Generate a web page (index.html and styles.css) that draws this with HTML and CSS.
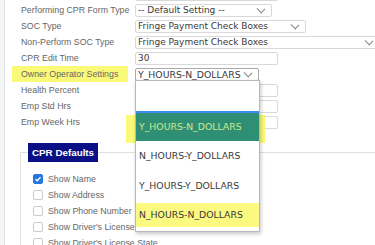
FILE: index.html
```html
<!DOCTYPE html>
<html lang="en">
<head>
  <meta charset="UTF-8" />
  <meta name="viewport" content="width=device-width, initial-scale=1" />
  <title>CPR Settings</title>
  <link rel="stylesheet" href="styles.css">
</head>
<body>
  <div class="page">
    <!-- Campos de configuracion -->
    <div class="form">
      <div class="row">
        <label></label>
        <div class="field w-143"></div>
      </div>
      <div class="row">
        <label>Performing CPR Form Type</label>
        <div class="field select w-137">-- Default Setting --<span class="chev"></span></div>
      </div>
      <div class="row">
        <label>SOC Type</label>
        <div class="field select w-171">Fringe Payment Check Boxes<span class="chev"></span></div>
      </div>
      <div class="row">
        <label>Non-Perform SOC Type</label>
        <div class="field select w-245">Fringe Payment Check Boxes<span class="chev"></span></div>
      </div>
      <div class="row">
        <label>CPR Edit Time</label>
        <div class="field w-143">30</div>
      </div>
      <div class="row">
        <label><span class="hl">Owner Operator Settings</span></label>
        <div class="field select open w-124">Y_HOURS-N_DOLLARS<span class="chev"></span></div>
      </div>
      <div class="row">
        <label>Health Percent</label>
        <div class="field w-143"></div>
      </div>
      <div class="row">
        <label>Emp Std Hrs</label>
        <div class="field w-143"></div>
      </div>
      <div class="row">
        <label>Emp Week Hrs</label>
        <div class="field w-143"></div>
      </div>
    </div>

    <fieldset class="defaults">
      <legend>CPR Defaults</legend>
      <div class="check"><span class="box checked"><svg width="8" height="8" viewBox="0 0 8 8"><path d="M1.5 4.2 L3.2 5.8 L6.5 2.2" fill="none" stroke="#fff" stroke-width="1.4"/></svg></span>Show Name</div>
      <div class="check"><span class="box"></span>Show Address</div>
      <div class="check"><span class="box"></span>Show Phone Number</div>
      <div class="check"><span class="box"></span>Show Driver's License</div>
      <div class="check"><span class="box"></span>Show Driver's License State</div>
    </fieldset>

    <!-- resaltado detras de la opcion activa -->
    <div class="mark-behind"></div>

    <div class="dropdown">
      <div class="opt blank"></div>
      <div class="opt active">Y_HOURS-N_DOLLARS</div>
      <div class="opt">N_HOURS-Y_DOLLARS</div>
      <div class="opt">Y_HOURS-Y_DOLLARS</div>
      <div class="opt marked"><span>N_HOURS-N_DOLLARS</span></div>
    </div>
  </div>
</body>
</html>
```

FILE: styles.css
```css
body {
  margin: 0;
  background: #f3f5f7;
  font-family: "Liberation Sans", Arial, sans-serif;
  overflow: hidden;
}
.page {
  position: relative;
  margin-left: 4px;
  height: 245px;
  background: white;
  border-left: 1px solid #dfe3e7;
  overflow: hidden;
}
.form {
  margin-top: -14px;
  padding-left: 16px;
}
.row {
  display: grid;
  grid-template-columns: 114px 1fr;
  height: 16px;
  align-items: center;
}
.row label {
  font-size: 8.8px;
  color: #666;
  line-height: 16px;
  white-space: nowrap;
}
.hl {
  display: inline-block;
  background: #fbf978;
  margin-left: -9px;
  padding: 0 10px 0 9px;
  height: 16px;
}
.field {
  position: relative;
  box-sizing: border-box;
  height: 13px;
  border: 1px solid #d9d9d9;
  border-radius: 2px;
  background: white;
  font-family: "DejaVu Sans", Verdana, sans-serif;
  font-size: 9px;
  line-height: 11px;
  color: #3a3a3a;
  padding-left: 2px;
  white-space: nowrap;
  overflow: hidden;
}
.field.open {
  border-color: #aaa;
  font-size: 9.3px;
}
.w-124 { width: 124px; }
.w-137 { width: 137px; }
.w-143 { width: 143px; }
.w-171 { width: 171px; }
.w-245 { width: 245px; }
.chev {
  position: absolute;
  right: 7px;
  top: 1px;
  width: 5px;
  height: 5px;
  border-right: 1px solid #888;
  border-bottom: 1px solid #888;
  transform: rotate(45deg) scaleX(1.1);
}
.defaults {
  margin: 13px -60px 0 15px;
  padding: 9px 0 0 12px;
  border: 1px solid #e0e0e0;
  border-right: none;
  border-bottom: none;
}
.defaults legend {
  margin-left: -5px;
  padding: 0 4px;
  height: 19px;
  line-height: 19px;
  background: #0b0f86;
  color: white;
  font-weight: bold;
  font-size: 9.8px;
}
.check {
  display: flex;
  align-items: center;
  gap: 5px;
  height: 16px;
  font-size: 8.8px;
  color: #666;
  white-space: nowrap;
}
.box {
  box-sizing: border-box;
  width: 10px;
  height: 10px;
  border: 1px solid #cacaca;
  border-radius: 2px;
  background: white;
  display: flex;
  align-items: center;
  justify-content: center;
}
.box.checked {
  background: #2575e3;
  border-color: #2575e3;
}
.mark-behind {
  position: absolute;
  left: 121px;
  top: 115px;
  width: 139px;
  height: 28px;
  background: #fbf978;
  z-index: 1;
}
.dropdown {
  position: absolute;
  left: 130px;
  top: 80px;
  width: 123px;
  border: 1px solid #b8b8b8;
  background: white;
  box-shadow: 1px 2px 4px rgba(0,0,0,0.22);
  z-index: 2;
  font-family: "DejaVu Sans", Verdana, sans-serif;
  font-size: 9.3px;
  color: #3a3a3a;
}
.opt {
  height: 30px;
  line-height: 30px;
  padding-left: 3px;
  white-space: nowrap;
}
.opt.active {
  height: 28px;
  line-height: 28px;
  border-top: 2px solid #3c8cf2;
  background: #2f8f74;
  color: #cbea8e;
}
.opt.marked {
  padding: 2px 0 4px 0;
  height: 24px;
}
.opt.marked span {
  display: block;
  height: 24px;
  line-height: 24px;
  padding-left: 3px;
  background: #fbf980;
}
```
